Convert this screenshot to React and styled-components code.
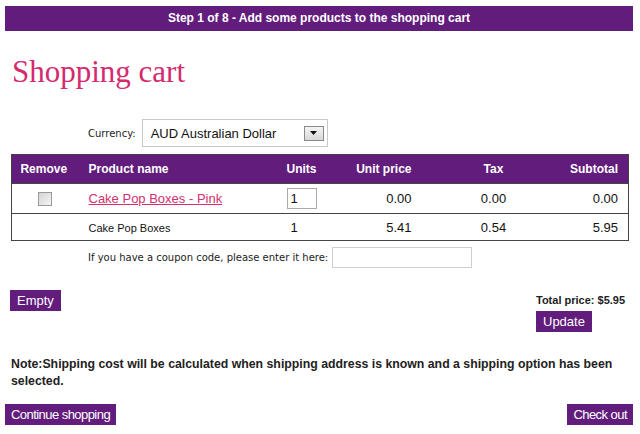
import React from "react";
import styled, { createGlobalStyle } from "styled-components";

const GlobalStyle = createGlobalStyle`
  html, body {
    margin: 0;
    padding: 0;
    background: #ffffff;
  }
  body {
    font-family: "Liberation Sans", Arial, sans-serif;
    color: #222;
  }
`;

const PURPLE = "#611c7c";

const items = [
  { name: "Cake Pop Boxes - Pink", units: "1", price: "0.00", tax: "0.00", subtotal: "0.00", editable: true },
  { name: "Cake Pop Boxes", units: "1", price: "5.41", tax: "0.54", subtotal: "5.95", editable: false },
];

function App() {
  return (
    <Page>
      <GlobalStyle />
      <StepBar>Step 1 of 8 - Add some products to the shopping cart</StepBar>
      <Content>
        <Title>Shopping cart</Title>
        <CurrencyRow>
          <SmallLabel>Currency:</SmallLabel>
          <Select>
            <span>AUD Australian Dollar</span>
            <DropButton>
              <svg width="7" height="4" viewBox="0 0 7 4">
                <path d="M0 0 L7 0 L3.5 4 Z" fill="#111" />
              </svg>
            </DropButton>
          </Select>
        </CurrencyRow>

        <CartTable>
          <colgroup>
            <col style={{ width: 64 }} />
            <col style={{ width: 205 }} />
            <col style={{ width: 45 }} />
            <col style={{ width: 96 }} />
            <col style={{ width: 144 }} />
            <col style={{ width: 63 }} />
          </colgroup>
          <thead>
            <tr>
              <Th $align="center">Remove</Th>
              <Th $pad="13px">Product name</Th>
              <Th $pad="6px">Units</Th>
              <Th $align="right">Unit price</Th>
              <Th $align="center">Tax</Th>
              <Th $align="right">Subtotal</Th>
            </tr>
          </thead>
          <tbody>
            {items.map((item, i) => (
              <Row key={i} $tall={item.editable}>
                <Td $align="center">{item.editable && <CheckBox />}</Td>
                <Td $pad="13px">
                  {item.editable ? <ProductLink href="#">{item.name}</ProductLink> : <SubName>{item.name}</SubName>}
                </Td>
                <Td $pad="6px">
                  {item.editable ? <UnitsInput>{item.units}</UnitsInput> : <UnitsText>{item.units}</UnitsText>}
                </Td>
                <Td $align="right">{item.price}</Td>
                <Td $align="center">{item.tax}</Td>
                <Td $align="right">{item.subtotal}</Td>
              </Row>
            ))}
          </tbody>
        </CartTable>

        <CouponRow>
          <SmallLabel>If you have a coupon code, please enter it here:</SmallLabel>
          <CouponInput />
        </CouponRow>

        <ActionRow>
          <Button>Empty</Button>
          <TotalBox>
            <TotalText>Total price: $5.95</TotalText>
            <Button>Update</Button>
          </TotalBox>
        </ActionRow>

        <Note>
          Note:Shipping cost will be calculated when shipping address is known and a shipping option has been selected.
        </Note>
      </Content>
      <FooterRow>
        <Button $narrow>Continue shopping</Button>
        <Button $narrow>Check out</Button>
      </FooterRow>
    </Page>
  );
}

const Page = styled.div`
  width: 640px;
  padding: 6px 7px 0 5px;
  box-sizing: border-box;
`;

const StepBar = styled.div`
  background: ${PURPLE};
  color: #fff;
  font-weight: bold;
  font-size: 12px;
  height: 25px;
  line-height: 25px;
  text-align: center;
`;

const Content = styled.div`
  padding: 0 5px 0 6px;
`;

const Title = styled.h1`
  margin: 23px 0 0 1px;
  font-family: "Liberation Serif", "Times New Roman", serif;
  font-weight: normal;
  font-size: 31px;
  line-height: 36px;
  color: #d42a6e;
`;

const CurrencyRow = styled.div`
  display: flex;
  align-items: center;
  gap: 6px;
  margin: 29px 0 0 77px;
`;

const SmallLabel = styled.span`
  font-family: "DejaVu Sans", Verdana, sans-serif;
  font-size: 10px;
  color: #222;
`;

const Select = styled.div`
  width: 186px;
  height: 28px;
  box-sizing: border-box;
  border: 1px solid #c8c8c8;
  display: flex;
  align-items: center;
  justify-content: space-between;
  padding: 0 3px 0 8px;
  font-size: 13px;
  color: #111;
`;

const DropButton = styled.div`
  width: 20px;
  height: 15px;
  box-sizing: border-box;
  border: 1px solid #8a8a8a;
  background: linear-gradient(#f4f4f4, #d8d8d8);
  display: flex;
  align-items: center;
  justify-content: center;
`;

const CartTable = styled.table`
  margin-top: 7px;
  width: 617px;
  table-layout: fixed;
  border-collapse: collapse;
  border: 1px solid #444;
  font-size: 13px;
`;

const Th = styled.th`
  background: ${PURPLE};
  color: #fff;
  font-size: 12px;
  font-weight: bold;
  height: 28px;
  padding: 0 ${(p) => (p.$align === "right" ? "10px" : "0")} 0 ${(p) => p.$pad || "0"};
  text-align: ${(p) => p.$align || "left"};
`;

const Row = styled.tr`
  height: ${(p) => (p.$tall ? "30px" : "27px")};
  border-top: 1px solid #444;
`;

const Td = styled.td`
  padding: 0 ${(p) => (p.$align === "right" ? "10px" : "0")} 0 ${(p) => p.$pad || "0"};
  text-align: ${(p) => p.$align || "left"};
  color: #111;
`;

const CheckBox = styled.span`
  display: inline-block;
  width: 12px;
  height: 12px;
  border: 1px solid #9a9a9a;
  background: linear-gradient(135deg, #d4d4d4, #f4f4f4);
  vertical-align: middle;
  margin-left: 3px;
`;

const ProductLink = styled.a`
  color: #d4306f;
  text-decoration: underline;
  font-size: 13px;
`;

const SubName = styled.span`
  font-size: 11px;
`;

const UnitsInput = styled.div`
  width: 30px;
  height: 21px;
  box-sizing: border-box;
  border: 1px solid #aaa;
  line-height: 19px;
  padding-left: 3px;
  font-size: 13px;
`;

const UnitsText = styled.span`
  padding-left: 4px;
`;

const CouponRow = styled.div`
  display: flex;
  align-items: center;
  gap: 4px;
  margin: 6px 0 0 77px;
`;

const CouponInput = styled.div`
  width: 140px;
  height: 21px;
  box-sizing: border-box;
  border: 1px solid #cfcfcf;
`;

const ActionRow = styled.div`
  display: flex;
  justify-content: space-between;
  align-items: flex-start;
  margin: 22px 0 0 -1px;
`;

const TotalBox = styled.div`
  display: flex;
  flex-direction: column;
  align-items: flex-start;
  width: 92px;
`;

const TotalText = styled.div`
  font-size: 11px;
  font-weight: bold;
  height: 21px;
  line-height: 21px;
`;

const Button = styled.button`
  background: ${PURPLE};
  color: #fff;
  border: none;
  border-radius: 0;
  font-family: "Liberation Sans", Arial, sans-serif;
  font-size: 13px;
  letter-spacing: ${(p) => (p.$narrow ? "-0.55px" : "0")};
  height: 21px;
  padding: 0 ${(p) => (p.$narrow ? "6px" : "7px")};
  cursor: pointer;
`;

const Note = styled.p`
  margin: 24px 0 0;
  font-size: 12.3px;
  font-weight: bold;
  line-height: 17px;
  color: #222;
`;

const FooterRow = styled.div`
  display: flex;
  justify-content: space-between;
  margin-top: 14px;
`;

export default App;
